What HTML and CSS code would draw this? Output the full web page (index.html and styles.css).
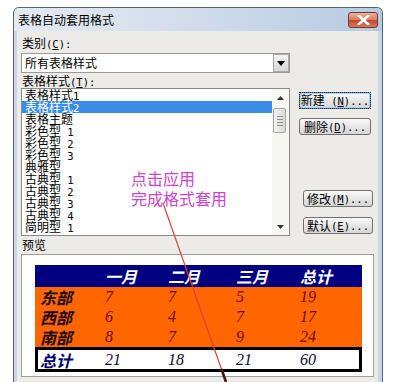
FILE: index.html
```html
<!DOCTYPE html>
<html>
<head>
<meta charset="utf-8">
<link rel="stylesheet" href="styles.css">
</head>
<body>
<div class="window">
  <div class="titlebar">
    <span class="title">表格自动套用格式</span>
    <span class="close"><svg width="13" height="10" viewBox="0 0 13 10"><path d="M2 1 L11 9 M11 1 L2 9" stroke="#fff" stroke-width="2.6" stroke-linecap="square"/></svg></span>
  </div>
  <div class="frame">
    <div class="client">
      <div class="label l1">类别<span class="a">(<u>C</u>):</span></div>
      <div class="select">
        <span class="select-text">所有表格样式</span>
        <span class="drop"><svg width="8" height="5" viewBox="0 0 8 5"><path d="M0 0 H8 L4 5 Z" fill="#000"/></svg></span>
      </div>
      <div class="label l2">表格样式<span class="a">(<u>T</u>):</span></div>
      <div class="mid">
        <div class="listbox">
          <ul class="items">
            <li>表格样式<span class="a">1</span></li>
            <li class="sel">表格样式<span class="a">2</span></li>
            <li>表格主题</li>
            <li>彩色型<span class="a"> 1</span></li>
            <li>彩色型<span class="a"> 2</span></li>
            <li>彩色型<span class="a"> 3</span></li>
            <li>典雅型</li>
            <li>古典型<span class="a"> 1</span></li>
            <li>古典型<span class="a"> 2</span></li>
            <li>古典型<span class="a"> 3</span></li>
            <li>古典型<span class="a"> 4</span></li>
            <li>简明型<span class="a"> 1</span></li>
          </ul>
          <div class="scroll">
            <div class="sbtn"><svg width="7" height="4" viewBox="0 0 7 4"><path d="M0 4 H7 L3.5 0 Z" fill="#333"/></svg></div>
            <div class="thumb"><span></span><span></span><span></span><span></span></div>
            <div class="track"></div>
            <div class="sbtn"><svg width="7" height="4" viewBox="0 0 7 4"><path d="M0 0 H7 L3.5 4 Z" fill="#333"/></svg></div>
          </div>
        </div>
        <div class="buttons">
          <div class="btn b-new"><span class="focus">新建<span class="a"> (<u>N</u>)...</span></span></div>
          <div class="btn b-del">删除<span class="a"> (<u>D</u>)...</span></div>
          <div class="btn b-mod">修改<span class="a"> (<u>M</u>)...</span></div>
          <div class="btn b-def">默认<span class="a"> (<u>E</u>)...</span></div>
        </div>
      </div>
      <div class="label l3">预览</div>
      <div class="preview">
        <table class="ptable">
          <colgroup><col class="c0"><col class="c1"><col class="c2"><col class="c3"><col class="c4"></colgroup>
          <tr class="head"><td></td><td>一月</td><td>二月</td><td>三月</td><td>总计</td></tr>
          <tr class="body"><th>东部</th><td>7</td><td>7</td><td>5</td><td>19</td></tr>
          <tr class="body"><th>西部</th><td>6</td><td>4</td><td>7</td><td>17</td></tr>
          <tr class="body"><th>南部</th><td>8</td><td>7</td><td>9</td><td>24</td></tr>
          <tr class="total"><th>总计</th><td>21</td><td>18</td><td>21</td><td>60</td></tr>
        </table>
      </div>
    </div>
  </div>
</div>
<div class="note">点击应用<br>完成格式套用</div>
<svg class="arrow" width="398" height="382" viewBox="0 0 398 382">
  <line x1="163" y1="203" x2="226" y2="382" stroke="#e0403a" stroke-width="1.2"/>
  <path d="M221.5 369 L226 382" stroke="#4a1515" stroke-width="2.6"/>
</svg>
</body>
</html>
```

FILE: styles.css
```css
* { box-sizing: border-box; }
html, body { margin: 0; padding: 0; }
body {
  width: 398px;
  height: 382px;
  overflow: hidden;
  position: relative;
  background: #fff;
  font-family: "Noto Sans CJK SC", "Noto Sans", sans-serif;
  font-size: 12px;
  color: #000;
}
.a { font-family: "DejaVu Sans Mono", "Liberation Mono", monospace; font-size: 10.5px; }

.window {
  margin: 7px 0 0 13px;
  width: 370px;
  height: 380px;
  border: 1px solid #56626f;
  border-bottom: none;
  border-radius: 6px 6px 0 0;
  background: #c8d7e9;
  display: flex;
  flex-direction: column;
  overflow: hidden;
}
.titlebar {
  height: 23px;
  flex: none;
  display: flex;
  align-items: center;
  padding: 0 4px 0 4px;
  background: linear-gradient(to right, #e4eaf2 0%, #d3deeb 45%, #b6cae2 100%);
}
.title { line-height: 14px; font-size: 12px; }
.close {
  margin-left: auto;
  width: 30px;
  height: 16px;
  border: 1px solid #6d3b30;
  border-radius: 3px;
  background: linear-gradient(#eeb09c 0%, #dc7a5e 48%, #c44a2e 52%, #d67455 100%);
  display: flex;
  align-items: center;
  justify-content: center;
}
.frame { flex: 1; padding: 0 4px 0 3px; display: flex; }
.client {
  flex: 1;
  background: #ecebe7;
  padding: 4px 4px 0 4px;
}
.label { padding-left: 1px; white-space: nowrap; }
.l1 { height: 16px; line-height: 16px; }
.l2 { height: 15px; line-height: 15px; }
.l3 { height: 18px; line-height: 18px; }

.select {
  margin-top: 2px;
  width: 269px;
  height: 20px;
  border: 1px solid #9a9a9a;
  background: #fff;
  display: flex;
  align-items: center;
  padding-left: 3px;
}
.select-text { flex: 1; line-height: 16px; }
.drop {
  width: 16px;
  height: 18px;
  border: 1px solid #a9a9a9;
  background: linear-gradient(#f4f4f4, #d6d6d6);
  display: flex;
  align-items: center;
  justify-content: center;
}

.mid { display: flex; align-items: flex-start; }
.listbox {
  width: 269px;
  height: 148px;
  border: 1px solid #8a8a8a;
  background: #fff;
  display: flex;
}
.items {
  list-style: none;
  margin: 0;
  padding: 0;
  flex: 1;
}
.items li {
  height: 12px;
  line-height: 12px;
  padding-left: 3px;
  white-space: nowrap;
}
.items li.sel { background: #3a8ce6; color: #fff; }
.scroll {
  width: 17px;
  display: flex;
  flex-direction: column;
  background: #f6f6f3;
}
.sbtn {
  height: 17px;
  display: flex;
  align-items: center;
  justify-content: center;
}
.thumb {
  margin: 2px 3px 0 1px;
  height: 25px;
  border: 1px solid #a6a6a6;
  border-radius: 2px;
  background: linear-gradient(to right, #f2f2f2, #dadada);
  display: flex;
  flex-direction: column;
  align-items: center;
  justify-content: center;
  gap: 2px;
}
.thumb span { width: 6px; height: 1px; background: #8a8a8a; }
.track { flex: 1; }

.buttons { display: flex; flex-direction: column; margin-left: 9px; }
.btn {
  height: 17px;
  width: 72px;
  border: 1px solid #707070;
  border-radius: 3px;
  background: linear-gradient(#fbfbfb, #e6e6e6 50%, #d6d6d6);
  display: flex;
  align-items: center;
  justify-content: center;
  line-height: 14px;
  white-space: nowrap;
}
.b-new { margin-top: 4px; border-color: #3c7fb1; box-shadow: inset 0 0 0 1px #a8d6f2; }
.focus { outline: 1px dotted #333; outline-offset: 0; padding: 0 1px; line-height: 13px; }
.b-del { margin-top: 9px; }
.b-mod { margin-top: 55px; margin-left: 4px; width: 70px; }
.b-def { margin-top: 10px; margin-left: 4px; width: 70px; }

.preview {
  width: 353px;
  height: 123px;
  border: 1px solid #a0a0a0;
  background: #fff;
  padding: 10px 0 0 13px;
}
.ptable {
  border-collapse: separate;
  border-spacing: 0;
  table-layout: fixed;
  width: 327px;
}
.c0 { width: 65px; }
.c1 { width: 63px; }
.c2 { width: 68px; }
.c3 { width: 64px; }
.c4 { width: 67px; }
.ptable td, .ptable th {
  padding: 0 0 0 5px;
  text-align: left;
  white-space: nowrap;
  font-size: 16px;
  font-style: italic;
}
.ptable th { font-weight: bold; font-family: "Noto Sans CJK SC", sans-serif; }
.head td {
  height: 22px;
  line-height: 18px;
  background: #000080;
  color: #fff;
  font-weight: bold;
}
.body th, .body td { height: 20px; line-height: 18px; background: #ff6600; }
.body th { color: #1c0800; }
.body td { font-family: "Liberation Serif", serif; color: #6e0c00; }
.total th, .total td {
  height: 25px;
  line-height: 18px;
  background: #fff;
  border-top: 3px solid #000;
  border-bottom: 3px solid #000;
}
.total th { color: #000070; border-left: 3px solid #000; padding-left: 2px; }
.total td { font-family: "Liberation Serif", serif; color: #0a0a30; }
.total td:last-child { border-right: 3px solid #000; }

.note {
  position: absolute;
  left: 131px;
  top: 168px;
  font-size: 16px;
  line-height: 20px;
  color: #cc44cc;
  white-space: nowrap;
}
.arrow { position: absolute; left: 0; top: 0; }
```
